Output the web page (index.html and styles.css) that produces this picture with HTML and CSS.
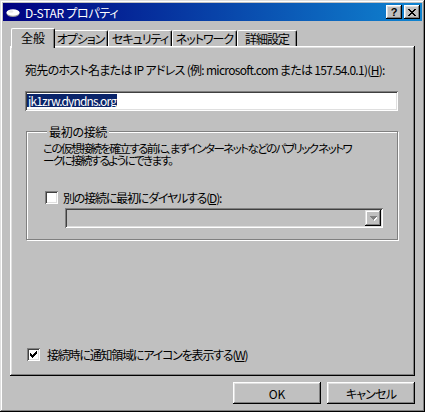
FILE: index.html
```html
<!DOCTYPE html>
<html lang="ja">
<head>
<meta charset="utf-8">
<title>D-STAR プロパティ</title>
<link rel="stylesheet" href="styles.css">
</head>
<body>
<div class="window">
  <div class="titlebar">
    <svg class="app-icon" width="16" height="16" viewBox="0 0 16 16">
      <ellipse cx="8" cy="9.5" rx="6.5" ry="3.5" fill="#9a9a9a"/>
      <ellipse cx="8" cy="8.5" rx="6.5" ry="3.2" fill="#ffffff"/>
      <ellipse cx="6" cy="7.5" rx="2.5" ry="1.2" fill="#e8e8e8"/>
    </svg>
    <span class="title">D-STAR プロパティ</span>
    <div class="caption-btns">
      <div class="cbtn help">?</div>
      <div class="cbtn">
        <svg width="8" height="7" viewBox="0 0 8 7" shape-rendering="crispEdges">
          <path d="M0 0h2v1h-2zM6 0h2v1h-2zM1 1h2v1h-2zM5 1h2v1h-2zM2 2h4v1h-4zM3 3h2v1h-2zM2 4h4v1h-4zM1 5h2v1h-2zM5 5h2v1h-2zM0 6h2v1h-2zM6 6h2v1h-2z" fill="#000"/>
        </svg>
      </div>
    </div>
  </div>

  <div class="dialog">
    <div class="tabs">
      <div class="tab active">全般</div>
      <div class="tab">オプション</div>
      <div class="tab">セキュリティ</div>
      <div class="tab">ネットワーク</div>
      <div class="tab">詳細設定</div>
    </div>

    <div class="panel">
      <div class="field-label">宛先のホスト名または IP アドレス (例: microsoft.com または 157.54.0.1)(<u>H</u>):</div>
      <div class="textbox"><span class="sel">jk1zrw.dyndns.org</span></div>

      <fieldset class="group">
        <legend>最初の接続</legend>
        <p class="desc">この仮想接続を確立する前に、まずインターネットなどのパブリック ネットワ<br>ークに接続するようにできます。</p>
        <div class="check">
          <span class="box"></span>
          <span class="check-label">別の接続に最初にダイヤルする(<u>D</u>):</span>
        </div>
        <div class="combo">
          <div class="drop">
            <svg width="7" height="5" viewBox="0 0 7 5" shape-rendering="crispEdges">
              <path d="M1 1h7v1h-7zM2 2h5v1h-5zM3 3h3v1h-3zM4 4h1v1h-1z" fill="#ffffff"/>
              <path d="M0 0h7v1h-7zM1 1h5v1h-5zM2 2h3v1h-3zM3 3h1v1h-1z" fill="#808080"/>
            </svg>
          </div>
        </div>
      </fieldset>

      <div class="check bottom-check">
        <span class="box">
          <svg width="13" height="13" viewBox="0 0 13 13" shape-rendering="crispEdges">
            <path d="M9 3h1v1h-1zM8 4h2v1h-2zM3 5h1v1h-1zM7 5h3v1h-3zM3 6h2v1h-2zM6 6h3v1h-3zM3 7h5v1h-5zM4 8h3v1h-3zM5 9h1v1h-1z" fill="#000"/>
          </svg>
        </span>
        <span class="check-label">接続時に通知領域にアイコンを表示する(<u>W</u>)</span>
      </div>
    </div>

    <div class="buttons">
      <div class="btn">OK</div>
      <div class="btn cancel">キャンセル</div>
    </div>
  </div>
</div>
</body>
</html>
```

FILE: styles.css
```css
html, body {
  margin: 0;
  padding: 0;
  background: #c0c0c0;
}

body {
  font-family: "Noto Sans CJK JP", sans-serif;
  font-size: 12px;
  line-height: 13px;
  color: #000;
  font-feature-settings: "palt";
}

.window {
  width: 425px;
  height: 412px;
  box-sizing: border-box;
  padding: 3px;
  background: #c0c0c0;
  box-shadow:
    inset -1px -1px #000000,
    inset 1px 1px #dfdfdf,
    inset -2px -2px #808080,
    inset 2px 2px #ffffff;
  display: flex;
  flex-direction: column;
}

/* ---------- title bar ---------- */
.titlebar {
  height: 18px;
  display: flex;
  align-items: center;
  background: linear-gradient(to right, #000080, #1084d0);
  color: #fff;
  padding-left: 2px;
  padding-right: 2px;
}

.app-icon {
  flex: none;
  margin-right: 4px;
}

.title {
  flex: 1;
  white-space: nowrap;
  font-size: 12px;
  letter-spacing: -0.3px;
}

.caption-btns {
  display: flex;
  gap: 2px;
}

.cbtn {
  width: 16px;
  height: 14px;
  box-sizing: border-box;
  background: #c0c0c0;
  color: #000;
  display: flex;
  align-items: center;
  justify-content: center;
  box-shadow:
    inset -1px -1px #000000,
    inset 1px 1px #ffffff,
    inset -2px -2px #808080,
    inset 2px 2px #dfdfdf;
}

.cbtn.help {
  font-family: "Liberation Sans", sans-serif;
  font-weight: bold;
  font-size: 11px;
  line-height: 14px;
}

/* ---------- dialog ---------- */
.dialog {
  flex: 1;
  display: flex;
  flex-direction: column;
  padding: 0 7px;
}

.tabs {
  display: flex;
  align-items: flex-end;
  margin-top: 7px;
  padding-left: 3px;
  height: 18px;
  position: relative;
  z-index: 1;
}

.tab {
  height: 16px;
  box-sizing: border-box;
  padding-top: 1px;
  border-top: 1px solid #ffffff;
  border-left: 1px solid #ffffff;
  border-right: 1px solid #000000;
  border-radius: 2px 2px 0 0;
  box-shadow: inset -1px 0 #808080;
  background: #c0c0c0;
  white-space: nowrap;
  text-align: center;
  letter-spacing: -1px;
}

.tab:nth-child(1) { width: 40px; }
.tab:nth-child(2) { width: 55px; }
.tab:nth-child(3) { width: 64px; }
.tab:nth-child(4) { width: 65px; }
.tab:nth-child(5) { width: 60px; }

.tab.active {
  width: 44px;
  height: 20px;
  margin: 0 -2px -2px -2px;
  padding-top: 2px;
  position: relative;
  z-index: 2;
  letter-spacing: 0;
}

.panel {
  height: 330px;
  box-sizing: border-box;
  padding: 17px 17px 0 15px;
  display: flex;
  flex-direction: column;
  box-shadow:
    inset -1px -1px #000000,
    inset 1px 1px #ffffff,
    inset -2px -2px #808080,
    inset 2px 2px #dfdfdf;
}

.field-label {
  white-space: nowrap;
  letter-spacing: -0.7px;
}

u {
  text-decoration: underline;
  text-underline-offset: 1px;
}

.textbox {
  margin-top: 15px;
  height: 20px;
  box-sizing: border-box;
  background: #fff;
  padding: 3px 2px 0 2px;
  box-shadow:
    inset 1px 1px #808080,
    inset -1px -1px #ffffff,
    inset 2px 2px #404040,
    inset -2px -2px #dfdfdf;
}

.sel {
  background: #0a246a;
  color: #fff;
  padding: 0 1px;
  display: inline-block;
  height: 13px;
  letter-spacing: -0.85px;
}

/* ---------- group box ---------- */
.group {
  margin: 14px 0 0 1px;
  padding: 0 12px 11px 16px;
  border: 1px solid #808080;
  box-shadow: inset 1px 1px #ffffff, 1px 1px #ffffff;
  min-width: 0;
}

.group legend {
  padding: 0 2px;
  margin-left: 4px;
  background: #c0c0c0;
  line-height: 13px;
  letter-spacing: -0.3px;
}

.desc {
  margin: 4px 0 0 0;
  white-space: nowrap;
  font-size: 11.5px;
  line-height: 12px;
  letter-spacing: -1.6px;
}

.check {
  display: flex;
  align-items: center;
  gap: 5px;
}

.check-label {
  white-space: nowrap;
  letter-spacing: -1.2px;
}

.group .check {
  margin-top: 25px;
  margin-left: 2px;
}

.box {
  width: 13px;
  height: 13px;
  flex: none;
  box-sizing: border-box;
  background: #fff;
  box-shadow:
    inset 1px 1px #808080,
    inset -1px -1px #ffffff,
    inset 2px 2px #404040,
    inset -2px -2px #dfdfdf;
  display: block;
}

.box svg {
  display: block;
}

.combo {
  margin: 4px 0 0 22px;
  width: 318px;
  height: 20px;
  box-sizing: border-box;
  background: #c0c0c0;
  padding: 2px;
  display: flex;
  justify-content: flex-end;
  box-shadow:
    inset 1px 1px #808080,
    inset -1px -1px #ffffff,
    inset 2px 2px #404040,
    inset -2px -2px #dfdfdf;
}

.drop {
  width: 16px;
  height: 16px;
  box-sizing: border-box;
  display: flex;
  align-items: center;
  justify-content: center;
  box-shadow:
    inset -1px -1px #000000,
    inset 1px 1px #dfdfdf,
    inset -2px -2px #808080,
    inset 2px 2px #ffffff;
}

.bottom-check {
  margin-top: auto;
  margin-bottom: 15px;
  margin-left: 2px;
  gap: 7px;
}

/* ---------- buttons ---------- */
.buttons {
  display: flex;
  justify-content: flex-end;
  gap: 6px;
  margin-top: 6px;
}

.btn {
  width: 88px;
  height: 22px;
  box-sizing: border-box;
  display: flex;
  align-items: center;
  justify-content: center;
  box-shadow:
    inset -1px -1px #000000,
    inset 1px 1px #ffffff,
    inset -2px -2px #808080,
    inset 2px 2px #dfdfdf;
}

.btn.cancel {
  letter-spacing: -0.8px;
}
```
